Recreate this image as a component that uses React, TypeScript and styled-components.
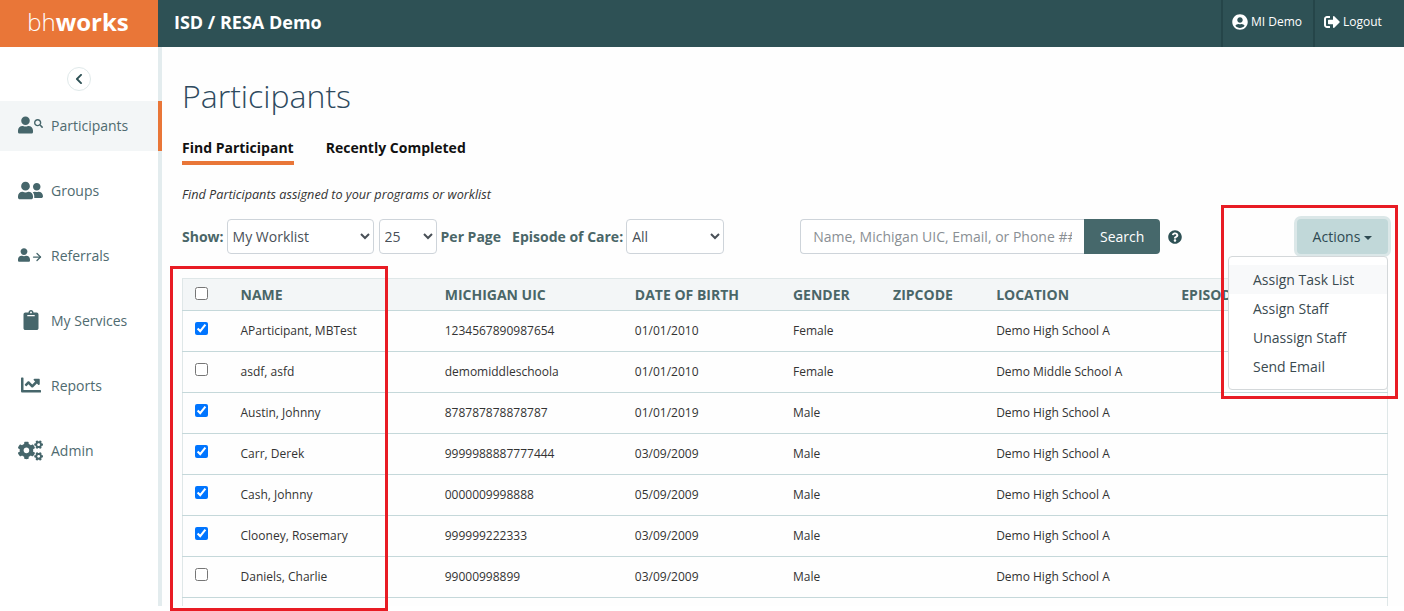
import React from "react";
import styled, { createGlobalStyle } from "styled-components";
import {
  FaUser, FaSearch, FaUserFriends, FaClipboard, FaChartLine, FaCogs,
  FaUserCircle, FaSignOutAlt, FaQuestionCircle, FaChevronLeft,
} from "react-icons/fa";
import { ArrowRight } from "lucide-react";

const Global = createGlobalStyle`
  html, body { margin: 0; padding: 0; background: #fff; }
  body { font-family: "Open Sans", "Liberation Sans", sans-serif; overflow: hidden; }
  * { box-sizing: border-box; }
`;

const Page = styled.div`
  position: relative;
  width: 1404px;
  height: 611px;
  overflow: hidden;
`;
const Header = styled.header`
  display: flex;
  height: 47px;
  background: #2e5155;
  color: #fff;
`;
const Logo = styled.div`
  width: 158px;
  padding-right: 2px;
  background: #e97638;
  font-size: 24px;
  line-height: 44px;
  text-align: center;
  font-weight: 300;
  b { font-weight: 700; }
`;
const OrgTitle = styled.div`
  flex: 1;
  padding-left: 16px;
  font-size: 18px;
  font-weight: 700;
  line-height: 44px;
`;
const HeaderLink = styled.div<{ $width: number; $pad: number }>`
  display: flex;
  align-items: center;
  gap: 3px;
  width: ${(p) => p.$width}px;
  padding: 0 0 4px ${(p) => p.$pad}px;
  border-left: 2px solid #254549;
  font-size: 12px;
  svg { font-size: 16px; }
`;
const Body = styled.div`
  display: flex;
  height: 559px;
`;
const Sidebar = styled.nav`
  width: 162px;
  flex: none;
  border-right: 4px solid #e3ecee;
  background: #fff;
`;
const CollapseRow = styled.div`
  display: flex;
  justify-content: center;
  padding-top: 20px;
  height: 54px;
`;
const Collapse = styled.div`
  display: flex;
  align-items: center;
  justify-content: center;
  width: 24px;
  height: 24px;
  border-radius: 50%;
  border: 1px solid #dfe9ea;
  color: #2e5155;
  font-size: 12px;
`;
const NavItem = styled.div<{ $active?: boolean }>`
  position: relative;
  display: flex;
  align-items: center;
  height: 50px;
  margin-bottom: 15px;
  padding: 0 0 2px 18px;
  font-size: 14px;
  color: #4f6b70;
  background: ${(p) => (p.$active ? "#f3f6f7" : "transparent")};
  &::after {
    content: "";
    display: ${(p) => (p.$active ? "block" : "none")};
    position: absolute;
    right: -4px;
    top: 0;
    width: 4px;
    height: 50px;
    background: #e97638;
  }
`;
const NavIcon = styled.span<{ $size?: number }>`
  display: flex;
  align-items: center;
  justify-content: center;
  width: 25px;
  height: 24px;
  margin-right: 8px;
  color: #46666b;
  font-size: ${(p) => p.$size ?? 20}px;
`;
const SmallIcon = styled.span<{ $size: number; $raise: number }>`
  display: flex;
  margin-left: 1px;
  margin-bottom: ${(p) => p.$raise}px;
  font-size: ${(p) => p.$size}px;
`;
const Main = styled.main`
  flex: 1;
  min-width: 0;
  padding: 28px 16px 0 20px;
  background: #fefefe;
`;
const Title = styled.h1`
  margin: 0;
  height: 41px;
  font-size: 32px;
  line-height: 41px;
  font-weight: 300;
  color: #2e4a5e;
`;
const Tabs = styled.div`
  display: flex;
  gap: 32px;
  margin-top: 21px;
`;
const Tab = styled.div<{ $active?: boolean }>`
  height: 28px;
  padding-top: 1px;
  font-size: 14px;
  line-height: 20px;
  font-weight: 700;
  color: #111;
  border-bottom: 4px solid ${(p) => (p.$active ? "#e97638" : "transparent")};
`;
const Hint = styled.p`
  margin: 21px 0 0;
  height: 16px;
  font-size: 12.65px;
  line-height: 16px;
  font-style: italic;
  color: #333;
  white-space: nowrap;
`;
const Filters = styled.div`
  display: flex;
  align-items: center;
  height: 35px;
  margin-top: 17px;
`;
const Label = styled.span<{ $ml?: number; $mr?: number }>`
  margin-left: ${(p) => p.$ml ?? 0}px;
  margin-right: ${(p) => p.$mr ?? 0}px;
  font-size: 14px;
  font-weight: 700;
  color: #4a6668;
  white-space: nowrap;
`;
const Select = styled.select<{ $w: number; $ml?: number }>`
  width: ${(p) => p.$w}px;
  margin-left: ${(p) => p.$ml ?? 0}px;
  height: 35px;
  padding: 0 0 0 1px;
  background-color: #fff;
  border: 1px solid #ced4da;
  border-radius: 4px;
  font-family: "Open Sans", sans-serif;
  font-size: 14px;
  color: #495057;
`;
const SearchInput = styled.input`
  width: 284px;
  height: 35px;
  margin-left: 76px;
  padding: 0 12px;
  border: 1px solid #ced4da;
  border-right: 0;
  border-radius: 4px 0 0 4px;
  font-family: "Open Sans", sans-serif;
  font-size: 14px;
  &::placeholder { color: #8a8f94; opacity: 1; }
`;
const SearchButton = styled.button`
  width: 76px;
  height: 35px;
  border: 0;
  border-radius: 0 4px 4px 0;
  background: #46686b;
  color: #fff;
  font-family: "Open Sans", sans-serif;
  font-size: 14px;
`;
const Help = styled.span`
  display: flex;
  margin-left: 8px;
  color: #2e5155;
  font-size: 14px;
`;
const ActionsButton = styled.button`
  margin-left: auto;
  width: 91px;
  height: 35px;
  padding: 0;
  border: 0;
  border-radius: 4px;
  background: #c1d8d9;
  box-shadow: 0 0 0 3px #dbe7e8;
  color: #2e4a52;
  font-family: "Open Sans", sans-serif;
  font-size: 14px;
  &::after {
    content: "";
    display: inline-block;
    margin-left: 4px;
    vertical-align: 2px;
    border-top: 4px solid;
    border-left: 4px solid transparent;
    border-right: 4px solid transparent;
  }
`;
const Menu = styled.div`
  position: absolute;
  left: 1228px;
  top: 256px;
  width: 160px;
  padding: 8px 0;
  background: #fff;
  border: 1px solid #d4d8da;
  border-radius: 4px;
  z-index: 2;
`;
const MenuItem = styled.div<{ $hover?: boolean }>`
  height: 29px;
  padding-left: 24px;
  font-size: 14px;
  line-height: 29px;
  color: #3a4a50;
  background: ${(p) => (p.$hover ? "#f8f9fa" : "transparent")};
`;
const Table = styled.table`
  width: 1206px;
  margin-top: 24px;
  table-layout: fixed;
  border-collapse: collapse;
  border: 1px solid #dfe7e8;
  border-bottom: 0;
`;
const Th = styled.th`
  height: 32px;
  padding: 0 0 0 12px;
  background: #f3f6f7;
  border-top: 1px solid #dfe7e8;
  border-bottom: 1px solid #c5d8da;
  text-align: left;
  font-size: 14px;
  font-weight: 700;
  color: #4a6668;
  text-transform: uppercase;
  white-space: nowrap;
  overflow: hidden;
`;
const Td = styled.td`
  height: 41px;
  padding: 0 0 2px 12px;
  border-bottom: 1px solid #c5d8da;
  font-size: 12px;
  color: #333;
  white-space: nowrap;
`;
const Check = styled.input`
  display: block;
  margin: 0 0 3px;
  width: 13px;
  height: 13px;
`;
const RedBox = styled.div<{ $l: number; $t: number; $w: number; $h: number }>`
  position: absolute;
  left: ${(p) => p.$l}px;
  top: ${(p) => p.$t}px;
  width: ${(p) => p.$w}px;
  height: ${(p) => p.$h}px;
  border: 3px solid #e81c24;
  z-index: 3;
`;
const BottomMask = styled.div`
  position: absolute;
  left: 0;
  right: 0;
  top: 606px;
  height: 5px;
  background: #fff;
  z-index: 1;
`;

const rows: [boolean, string, string, string, string, string][] = [
  [true, "AParticipant, MBTest", "1234567890987654", "01/01/2010", "Female", "Demo High School A"],
  [false, "asdf, asfd", "demomiddleschoola", "01/01/2010", "Female", "Demo Middle School A"],
  [true, "Austin, Johnny", "878787878878787", "01/01/2019", "Male", "Demo High School A"],
  [true, "Carr, Derek", "9999988887777444", "03/09/2009", "Male", "Demo High School A"],
  [true, "Cash, Johnny", "0000009998888", "05/09/2009", "Male", "Demo High School A"],
  [true, "Clooney, Rosemary", "999999222333", "03/09/2009", "Male", "Demo High School A"],
  [false, "Daniels, Charlie", "99000998899", "03/09/2009", "Male", "Demo High School A"],
];
const widths = [46, 204, 190, 158, 100, 103, 185, 218];
const heads = ["Name", "Michigan UIC", "Date of Birth", "Gender", "Zipcode", "Location", "Episode of Care"];

export default function App() {
  return (
    <Page>
      <Global />
      <Header>
        <Logo>bh<b>works</b></Logo>
        <OrgTitle>ISD / RESA Demo</OrgTitle>
        <HeaderLink $width={92} $pad={9}><FaUserCircle />MI Demo</HeaderLink>
        <HeaderLink $width={91} $pad={9}><FaSignOutAlt />Logout</HeaderLink>
      </Header>
      <Body>
        <Sidebar>
          <CollapseRow><Collapse><FaChevronLeft /></Collapse></CollapseRow>
          <NavItem $active>
            <NavIcon><FaUser /><SmallIcon $size={9} $raise={4}><FaSearch /></SmallIcon></NavIcon>Participants
          </NavItem>
          <NavItem><NavIcon $size={25}><FaUserFriends /></NavIcon>Groups</NavItem>
          <NavItem>
            <NavIcon><FaUser /><SmallIcon $size={12} $raise={-4}><ArrowRight size={12} strokeWidth={2.5} /></SmallIcon></NavIcon>Referrals
          </NavItem>
          <NavItem><NavIcon><FaClipboard /></NavIcon>My Services</NavItem>
          <NavItem><NavIcon><FaChartLine /></NavIcon>Reports</NavItem>
          <NavItem><NavIcon $size={25}><FaCogs /></NavIcon>Admin</NavItem>
        </Sidebar>
        <Main>
          <Title>Participants</Title>
          <Tabs>
            <Tab $active>Find Participant</Tab>
            <Tab>Recently Completed</Tab>
          </Tabs>
          <Hint>Find Participants assigned to your programs or worklist</Hint>
          <Filters>
            <Label $mr={3}>Show:</Label>
            <Select $w={147} defaultValue="My Worklist"><option>My Worklist</option></Select>
            <Select $w={58} $ml={5} defaultValue="25"><option>25</option></Select>
            <Label $ml={4}>Per Page</Label>
            <Label $ml={11} $mr={3}>Episode of Care:</Label>
            <Select $w={98} defaultValue="All"><option>All</option></Select>
            <SearchInput placeholder="Name, Michigan UIC, Email, or Phone ##" />
            <SearchButton>Search</SearchButton>
            <Help><FaQuestionCircle /></Help>
            <ActionsButton>Actions</ActionsButton>
          </Filters>
          <Table>
            <colgroup>
              {widths.map((w, i) => <col key={i} width={w} />)}
            </colgroup>
            <thead>
              <tr>
                <Th><Check type="checkbox" readOnly /></Th>
                {heads.map((h) => <Th key={h}>{h}</Th>)}
              </tr>
            </thead>
            <tbody>
              {rows.map((r) => (
                <tr key={r[1]}>
                  <Td><Check type="checkbox" defaultChecked={r[0]} /></Td>
                  <Td>{r[1]}</Td>
                  <Td>{r[2]}</Td>
                  <Td>{r[3]}</Td>
                  <Td>{r[4]}</Td>
                  <Td />
                  <Td>{r[5]}</Td>
                  <Td />
                </tr>
              ))}
              <tr>
                {widths.map((w, i) => <Td key={i} />)}
              </tr>
            </tbody>
          </Table>
        </Main>
      </Body>
      <Menu>
        <MenuItem $hover>Assign Task List</MenuItem>
        <MenuItem>Assign Staff</MenuItem>
        <MenuItem>Unassign Staff</MenuItem>
        <MenuItem>Send Email</MenuItem>
      </Menu>
      <BottomMask />
      <RedBox $l={170} $t={266} $w={218} $h={345} />
      <RedBox $l={1221} $t={205} $w={177} $h={194} />
    </Page>
  );
}
